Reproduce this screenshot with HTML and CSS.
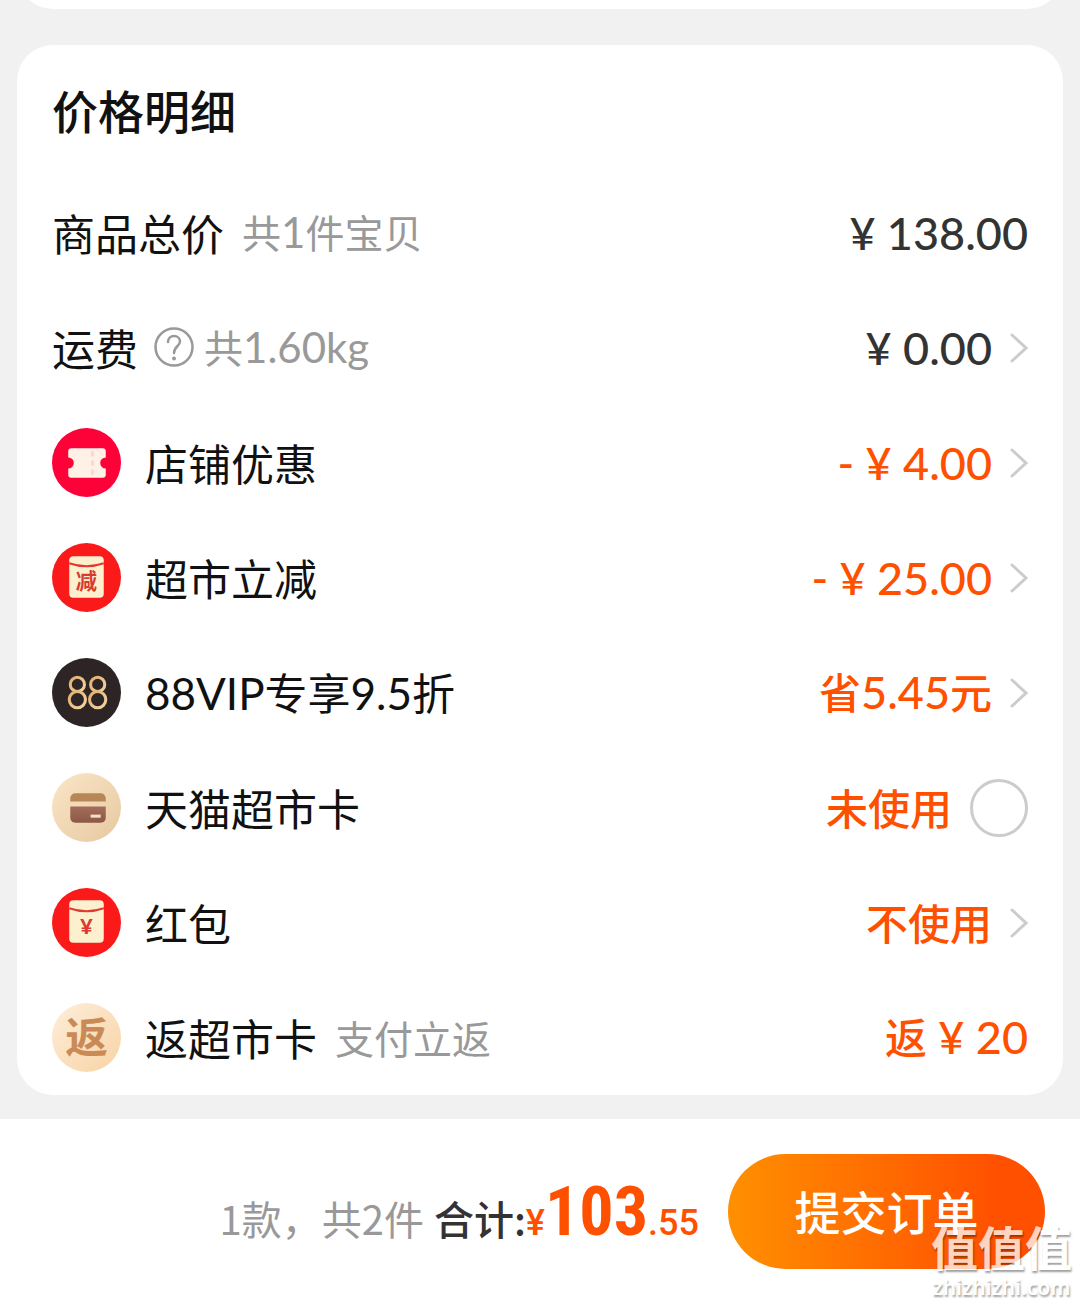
FILE: index.html
```html
<!DOCTYPE html>
<html lang="zh-CN">
<head>
  <meta charset="UTF-8" />
  <meta name="viewport" content="width=device-width, initial-scale=1.0" />
  <title>确认订单</title>
  <link rel="stylesheet" href="styles.css">
</head>
<body>
  <main>
    <section class="card card-prev"></section>

    <section class="card">
      <h2>价格明细</h2>

      <div class="row">
        <span class="label">商品总价</span>
        <span class="sub">共<span class="num">1</span>件宝贝</span>
        <span class="value dark"><span class="num">¥ 138.00</span></span>
      </div>

      <div class="row">
        <span class="label">运费</span>
        <button class="help" aria-label="运费说明">
          <svg viewBox="0 0 40 40" fill="none" stroke="#999" stroke-width="2.5">
            <circle cx="20" cy="20" r="18.500" />
            <path d="M14 15c0-3.600 2.600-6 6-6s6 2.400 6 5.600c0 4.600-6 5-6 11.400" stroke-linecap="round" />
            <circle cx="20" cy="31.500" r="2" fill="#999" stroke="none" />
          </svg>
        </button>
        <span class="sub">共<span class="num">1.60kg</span></span>
        <button class="value dark"><span class="num">¥ 0.00</span>
          <svg class="arrow" viewBox="0 0 18 30"><path d="M2 2l14 13L2 28" /></svg>
        </button>
      </div>

      <div class="row">
        <svg class="icon" viewBox="0 0 68 68">
          <circle cx="34" cy="34" r="34" fill="#fc0238" />
          <path d="M19 20h31a3 3 0 0 1 3 3v6a5 5 0 0 0 0 11v6a3 3 0 0 1-3 3H19a3 3 0 0 1-3-3v-6a5 5 0 0 0 0-11v-6a3 3 0 0 1 3-3z" fill="#fff1e6" />
          <path d="M40 23v24" stroke="#ffd5cd" stroke-width="3" stroke-dasharray="5 4" />
        </svg>
        <span class="label">店铺优惠</span>
        <button class="value"><span class="num">- ¥ 4.00</span>
          <svg class="arrow" viewBox="0 0 18 30"><path d="M2 2l14 13L2 28" /></svg>
        </button>
      </div>

      <div class="row">
        <svg class="icon" viewBox="0 0 68 68">
          <circle cx="34" cy="34" r="34" fill="#fb1a1a" />
          <rect x="17" y="13" width="34" height="41" rx="4" fill="#fdf0cf" />
          <path d="M17 20q17 6 34 0" fill="none" stroke="#e23a2e" stroke-width="2" />
          <text x="34" y="45" class="packet-text">减</text>
        </svg>
        <span class="label">超市立减</span>
        <button class="value"><span class="num">- ¥ 25.00</span>
          <svg class="arrow" viewBox="0 0 18 30"><path d="M2 2l14 13L2 28" /></svg>
        </button>
      </div>

      <div class="row">
        <svg class="icon" viewBox="0 0 68 68">
          <circle cx="34" cy="34" r="34" fill="#2d2525" />
          <g fill="none" stroke="url(#gold)" stroke-width="3">
            <ellipse cx="25" cy="26" rx="7" ry="7" />
            <ellipse cx="25" cy="41" rx="8" ry="8" />
            <ellipse cx="45" cy="26" rx="7" ry="7" />
            <ellipse cx="45" cy="41" rx="8" ry="8" />
          </g>
          <defs>
            <linearGradient id="gold" x1="0" y1="0" x2="1" y2="1">
              <stop offset="0" stop-color="#e0ae6c" />
              <stop offset="1" stop-color="#f3d5a4" />
            </linearGradient>
          </defs>
        </svg>
        <span class="label"><span class="num">88VIP</span>专享<span class="num">9.5</span>折</span>
        <button class="value"><span class="cn">省<span class="num">5.45</span>元</span>
          <svg class="arrow" viewBox="0 0 18 30"><path d="M2 2l14 13L2 28" /></svg>
        </button>
      </div>

      <div class="row">
        <svg class="icon" viewBox="0 0 68 68">
          <defs>
            <linearGradient id="cream" x1="0" y1="0" x2="1" y2="1">
              <stop offset="0" stop-color="#fbe6c8" />
              <stop offset="1" stop-color="#e6c8a0" />
            </linearGradient>
            <linearGradient id="brown" x1="0" y1="0" x2="0" y2="1">
              <stop offset="0" stop-color="#a46d5a" />
              <stop offset="1" stop-color="#8d5848" />
            </linearGradient>
          </defs>
          <circle cx="34" cy="34" r="34" fill="url(#cream)" />
          <path d="M18 28v-3a5 5 0 0 1 5-5h25a5 5 0 0 1 5 5v3z" fill="#b88757" />
          <path d="M18 33h35v11a5 5 0 0 1-5 5H23a5 5 0 0 1-5-5z" fill="url(#brown)" />
          <rect x="38" y="41" width="10" height="3" fill="#f7dfc4" />
        </svg>
        <label class="label" for="useCard">天猫超市卡</label>
        <span class="value"><span class="cn">未使用</span>
          <input type="checkbox" id="useCard">
        </span>
      </div>

      <div class="row">
        <svg class="icon" viewBox="0 0 68 68">
          <circle cx="34" cy="34" r="34" fill="#fb1a1a" />
          <rect x="17" y="12" width="34" height="42" rx="4" fill="#fdf0cf" />
          <path d="M17 20q17 6 34 0" fill="none" stroke="#e23a2e" stroke-width="2" />
          <text x="34" y="45" class="packet-text yen">¥</text>
        </svg>
        <span class="label">红包</span>
        <button class="value"><span class="cn">不使用</span>
          <svg class="arrow" viewBox="0 0 18 30"><path d="M2 2l14 13L2 28" /></svg>
        </button>
      </div>

      <div class="row">
        <svg class="icon" viewBox="0 0 68 68">
          <defs>
            <linearGradient id="peach" x1="0" y1="0" x2="1" y2="1">
              <stop offset="0" stop-color="#fdeedb" />
              <stop offset="1" stop-color="#f8d3a4" />
            </linearGradient>
          </defs>
          <circle cx="34" cy="34" r="34" fill="url(#peach)" />
          <text x="34" y="49" class="back-text">返</text>
        </svg>
        <span class="label">返超市卡</span>
        <span class="sub">支付立返</span>
        <span class="value"><span class="cn">返<span class="num"> ¥ 20</span></span></span>
      </div>
    </section>
  </main>

  <footer>
    <div class="summary">
      <span class="count">1款，共2件</span>
      <span class="total">合计:<span class="price">¥<b>103</b>.55</span></span>
    </div>
    <button class="submit">提交订单</button>
  </footer>

  <div class="watermark">
    <span class="watermark-name">值值值</span>
    <span class="watermark-url">zhizhizhi.com</span>
  </div>
</body>
</html>
```

FILE: styles.css
```css
:root {
  --bg: #f1f1f1;
  --text: #111;
  --dark: #333;
  --muted: #999;
  --line: #ccc;
  --orange: #ff5000;
  --cjk: "Noto Sans CJK SC", sans-serif;
}
* { box-sizing: border-box; }
body {
  margin: 0; min-height: 100vh; position: relative; overflow: hidden;
  font-family: var(--cjk);
  background: var(--bg); color: var(--text);
  display: flex; flex-direction: column;
}
button {
  border: none; background: none; padding: 0;
  font: inherit; color: inherit; cursor: pointer;
}
main { flex: 1; padding: 0 17px 24px; }
.card { background: #fff; border-radius: 36px; padding: 0 35px; }
.card-prev { height: 80px; margin: -71px 0 36px; }
h2 {
  margin: 0; padding: 30px 0 32px;
  font-size: 46px; line-height: 68px; font-weight: 500;
}

.row { display: flex; align-items: center; height: 115px; line-height: 60px; }
.icon { width: 69px; height: 69px; margin-right: 24px; flex: none; }
.label { font-size: 43px; font-weight: 400; padding-bottom: 2px; }
.label .num { font-size: 44px; }
.label + .sub { margin-left: 18px; }
.sub { font-size: 39px; color: var(--muted); padding-bottom: 2px; }
.num { font-family: Lato, var(--cjk); font-size: 45px; }
.sub .num { font-size: 42px; }
.help { width: 40px; height: 40px; margin: 0 10px 2px 16px; }
.help svg { display: block; }
.value {
  margin-left: auto; display: flex; align-items: center;
  font-size: 42px; font-weight: 500; color: var(--orange); white-space: nowrap;
}
.value.dark { color: var(--dark); }
.arrow {
  width: 18px; height: 30px; margin-left: 18px;
  fill: none; stroke: var(--line); stroke-width: 3; stroke-linecap: round;
}
.value input {
  appearance: none; width: 58px; height: 58px; margin: 0 0 0 18px;
  border: 3px solid var(--line); border-radius: 50%;
}
.cn { padding-bottom: 2px; }
.value input:checked { background: var(--orange); border-color: var(--orange); }

.packet-text {
  font-size: 21px; font-weight: 700; fill: #d93b30; text-anchor: middle;
}
.packet-text.yen { font-family: Lato, var(--cjk); font-weight: 900; }
.back-text { font-size: 42px; font-weight: 700; fill: #c98a56; text-anchor: middle; }

footer {
  background: #fff; padding: 35px 35px 0; min-height: 186px;
  display: flex; justify-content: flex-end; align-items: flex-start; gap: 29px;
}
.summary {
  display: flex; align-items: baseline; gap: 10px;
  font-size: 40px; line-height: 128px; white-space: nowrap;
}
.count { color: var(--muted); }
.total { color: var(--dark); font-weight: 500; }
.price { color: var(--orange); font-family: Roboto, sans-serif; font-size: 36px; line-height: 1; }
.price b { font-family: "Roboto Condensed", Roboto, sans-serif; font-size: 68px; }
.submit {
  width: 317px; height: 115px; border-radius: 58px; padding-bottom: 4px;
  background: linear-gradient(90deg, #ff9000, #ff5000 85%);
  color: #fff; font-size: 46px; font-weight: 500;
}

.watermark {
  position: absolute; right: 8px; bottom: 2px;
  display: flex; flex-direction: column; align-items: center;
  color: #fff; opacity: 0.75; text-shadow: 1px 2px 2px rgba(0,0,0,0.5);
  pointer-events: none;
}
.watermark-name { font-size: 47px; line-height: 50px; font-weight: 700; }
.watermark-url { font-family: "Noto Sans", sans-serif; font-size: 21px; line-height: 32px; font-weight: 600; }
```
